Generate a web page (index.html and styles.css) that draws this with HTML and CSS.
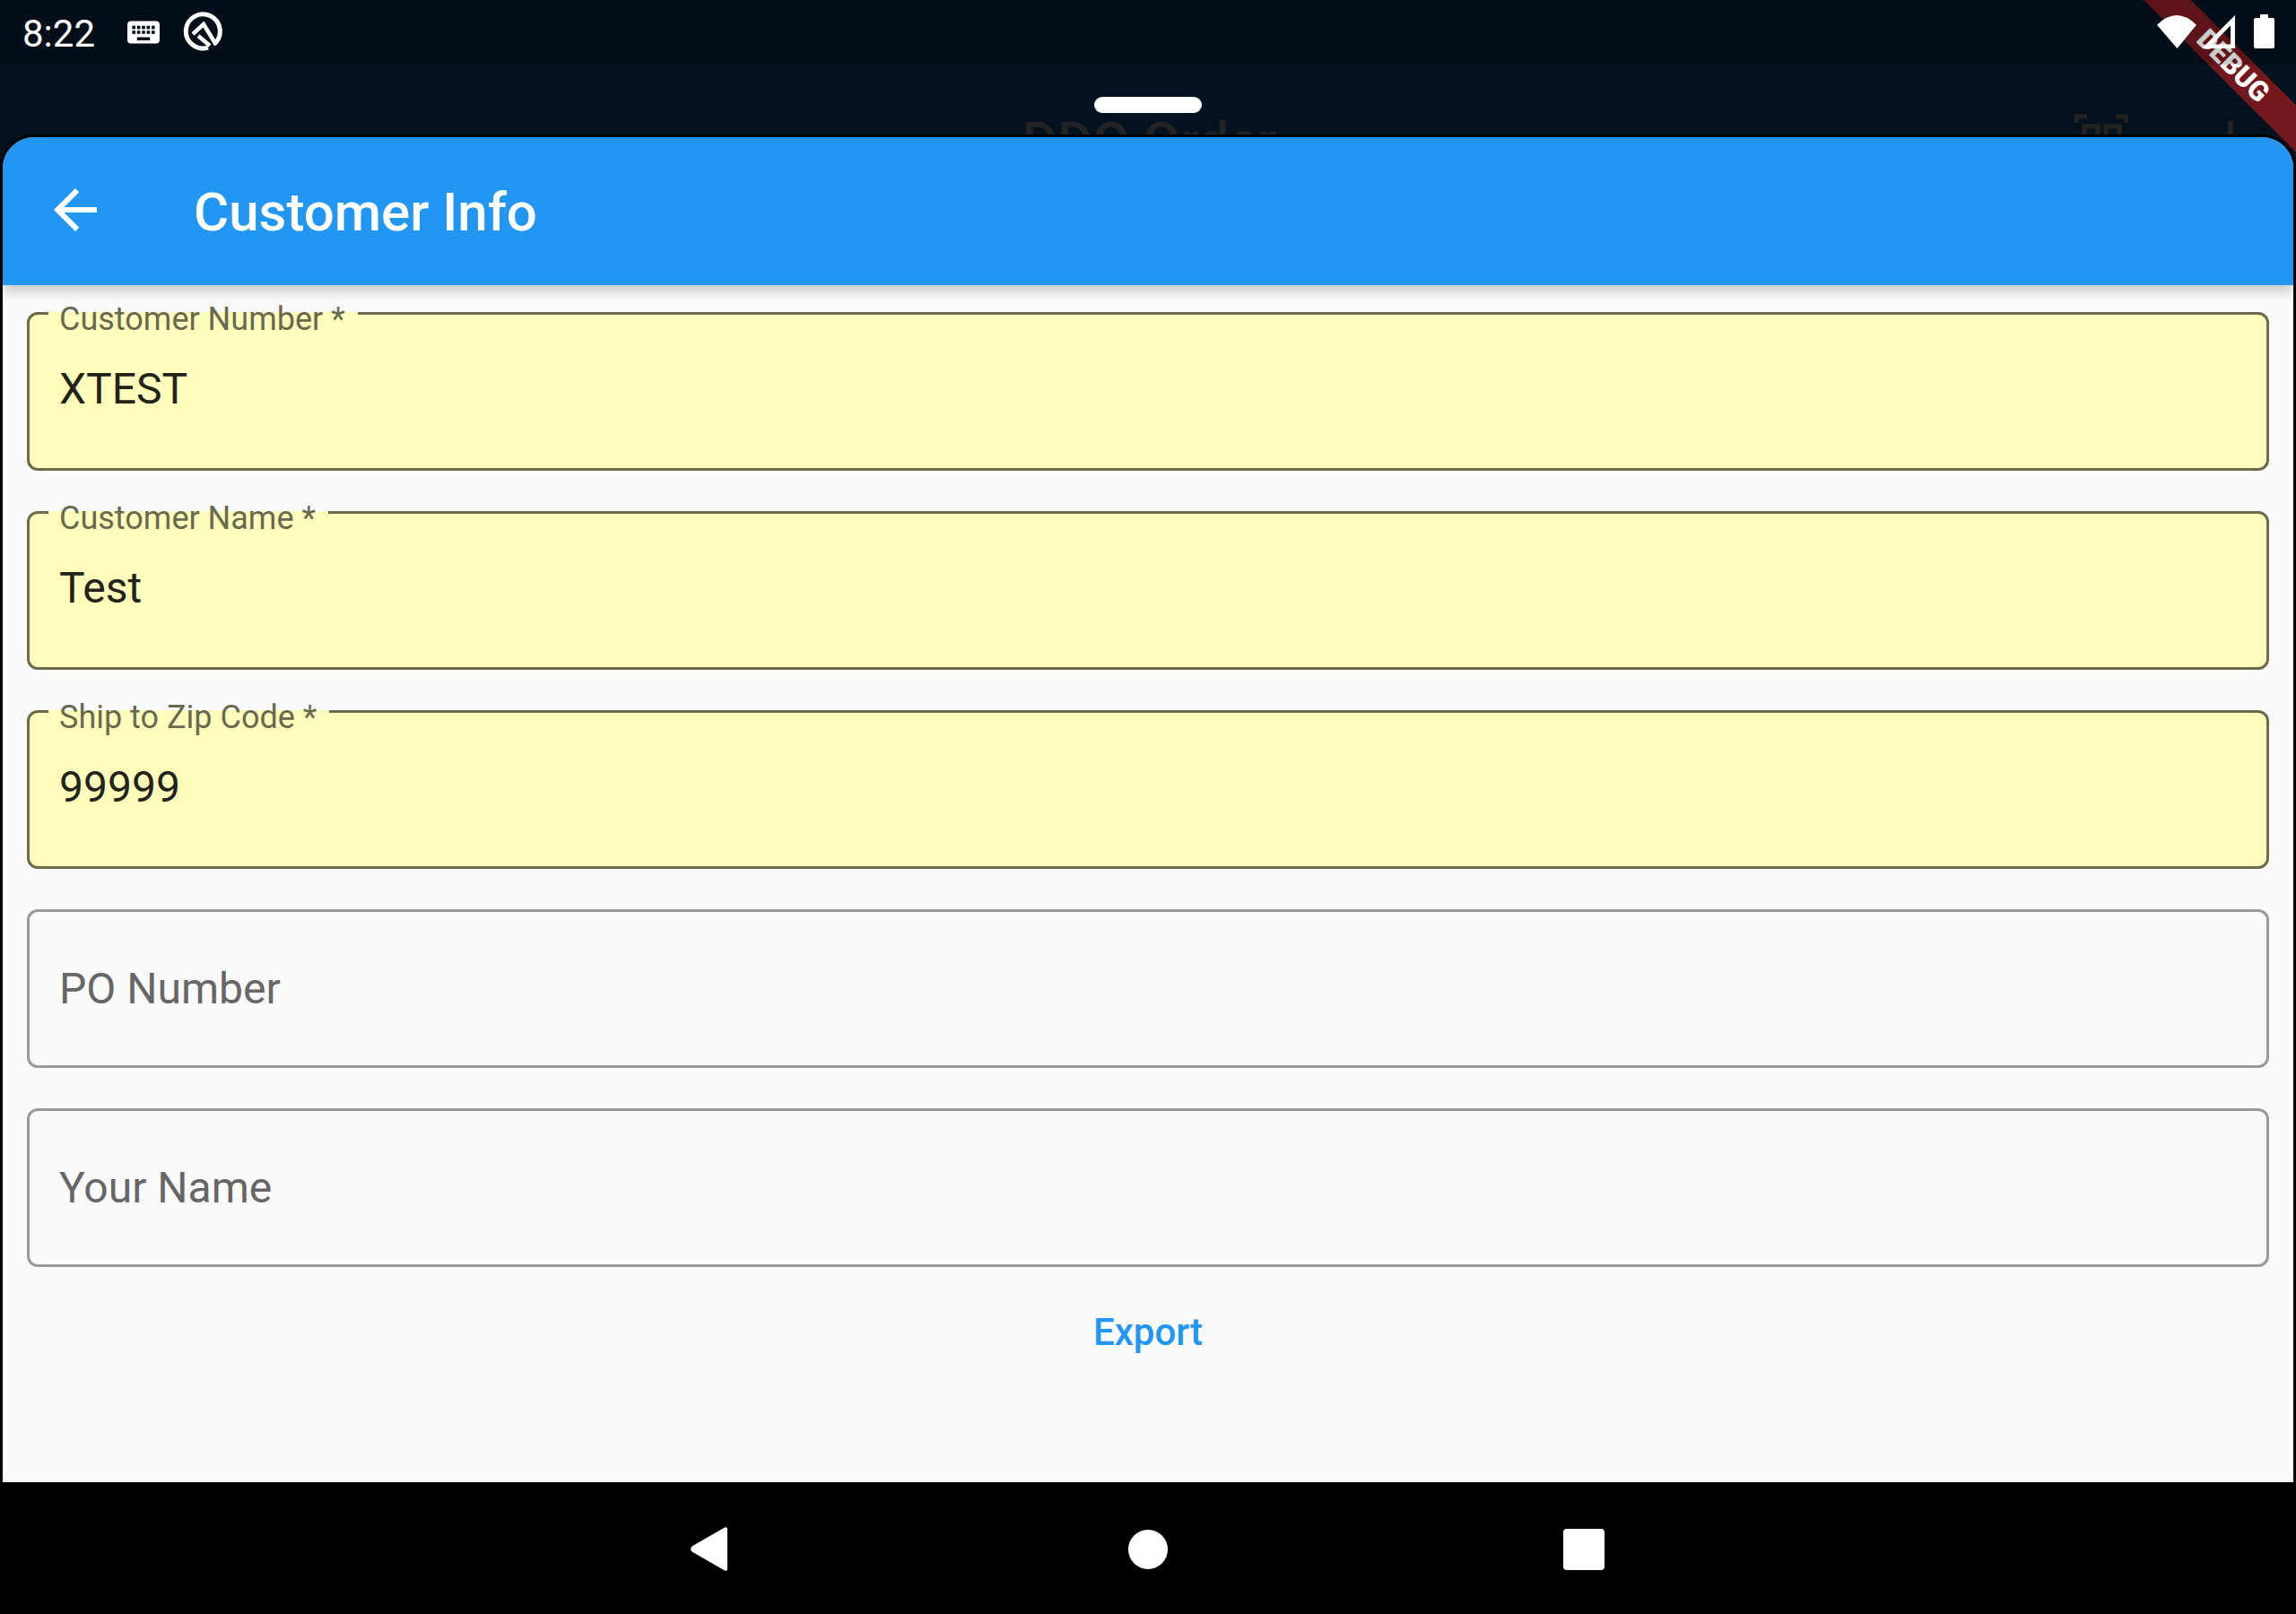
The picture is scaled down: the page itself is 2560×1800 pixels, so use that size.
FILE: index.html
```html
<!DOCTYPE html>
<html lang="en">
<head>
    <meta charset="UTF-8">
    <title>Customer Info</title>
    <link rel="stylesheet" href="styles.css">
</head>
<body>
    <div class="status-bar">
        <span class="clock">8:22</span>
        <svg class="ic-keyboard" viewBox="2 5 20 14"><path fill="#fff" d="M20 5H4c-1.1 0-1.99.9-1.99 2L2 17c0 1.1.9 2 2 2h16c1.1 0 2-.9 2-2V7c0-1.1-.9-2-2-2zm-9 3h2v2h-2V8zm0 3h2v2h-2v-2zM8 8h2v2H8V8zm0 3h2v2H8v-2zm-1 2H5v-2h2v2zm0-3H5V8h2v2zm9 7H8v-2h8v2zm0-4h-2v-2h2v2zm0-3h-2V8h2v2zm3 3h-2v-2h2v2zm0-3h-2V8h2v2z"/></svg>
        <svg class="ic-q" viewBox="0 0 44 44"><path fill="none" stroke="#fff" stroke-width="5" d="M35 36A19 19 0 1 0 28 40"/><path fill="none" stroke="#fff" stroke-width="4.5" d="M11 25L23 14L37 37M17 27L30 38"/></svg>
        <div class="status-right">
            <svg class="ic-wifi" viewBox="0 0 44 37"><path fill="#fff" d="M0 10.7Q22 -10.7 44 10.7L22.5 37Z"/></svg>
            <svg class="ic-signal" viewBox="0 0 37 37"><path fill="#fff" fill-rule="evenodd" d="M37 0V37H0ZM32 11.5V32.5H11.5Z"/></svg>
            <svg class="ic-battery" viewBox="0 0 23 38"><path fill="#fff" d="M7 0h9v4h5a2 2 0 0 1 2 2v30a2 2 0 0 1-2 2H2a2 2 0 0 1-2-2V6a2 2 0 0 1 2-2h5z"/></svg>
        </div>
    </div>

    <div class="backdrop">
        <div class="handle"></div>
        <span class="back-title">DDO Order</span>
        <svg class="back-scan" viewBox="0 0 60 30"><path fill="none" stroke="#24211f" stroke-width="5" d="M2 10V3H14M46 3H58V10M11 14H26V30H11ZM35 14H50V30H35Z"/></svg>
        <div class="back-more"></div>
    </div>

    <div class="sheet">
        <header class="app-bar">
            <svg class="ic-back" viewBox="0 0 24 24"><path fill="#fff" d="M20 11H7.83l5.59-5.59L12 4l-8 8 8 8 1.41-1.41L7.83 13H20v-2z"/></svg>
            <h1 class="title">Customer Info</h1>
        </header>
        <form class="form" onsubmit="return false;">
            <div class="field required">
                <label class="field-label">Customer Number *</label>
                <span class="field-value">XTEST</span>
            </div>
            <div class="field required">
                <label class="field-label">Customer Name *</label>
                <span class="field-value">Test</span>
            </div>
            <div class="field required">
                <label class="field-label">Ship to Zip Code *</label>
                <span class="field-value">99999</span>
            </div>
            <div class="field">
                <span class="field-hint">PO Number</span>
            </div>
            <div class="field">
                <span class="field-hint">Your Name</span>
            </div>
            <button class="export" type="submit">Export</button>
        </form>
    </div>

    <div class="nav-bar">
        <svg class="nav-back" viewBox="0 0 41 49"><path fill="#fff" d="M38 .6L1.500 21.500 1.500 21.500C-.3 23.500-.3 25.500 1.500 27.500L38 48.400C39.500 49.500 41 48.500 41 47V2C41 .5 39.500-.5 38 .6Z"/></svg>
        <div class="nav-home"></div>
        <div class="nav-recent"></div>
    </div>

    <div class="debug-banner">DEBUG</div>
</body>
</html>
```

FILE: styles.css
```css
* {
    box-sizing: border-box;
}
body {
    margin: 0;
    width: 2560px;
    height: 1800px;
    display: flex;
    flex-direction: column;
    position: relative;
    overflow: hidden;
    background-color: #04121f;
    font-family: Roboto, "Liberation Sans", sans-serif;
}

/* Status bar, sits over the debug ribbon */
.status-bar {
    height: 72px;
    flex: none;
    position: relative;
    z-index: 2;
    display: flex;
    align-items: flex-start;
    padding: 0 24px 0 25px;
    background-color: rgba(0, 0, 0, 0.2);
}
.clock {
    width: 80px;
    margin-top: 14px;
    font-size: 42px;
    line-height: 48px;
    font-weight: 400;
    color: #fff;
}
.ic-keyboard {
    width: 36px;
    height: 26px;
    margin: 23px 0 0 37px;
}
.ic-q {
    width: 44px;
    height: 44px;
    margin: 13px 0 0 26px;
}
.status-right {
    margin-left: auto;
    display: flex;
    align-items: flex-start;
}
.ic-wifi {
    width: 44px;
    height: 37px;
    margin-top: 17px;
}
.ic-signal {
    width: 37px;
    height: 37px;
    margin: 17px 0 0 6px;
}
.ic-battery {
    width: 23px;
    height: 38px;
    margin: 16px 0 0 21px;
}

/* Dimmed page behind the sheet */
.backdrop {
    height: 78px;
    flex: none;
    position: relative;
    overflow: hidden;
    display: flex;
    align-items: flex-start;
    padding: 55px 70px 0 1140px;
}
.handle {
    position: absolute;
    left: 1220px;
    top: 36px;
    width: 120px;
    height: 18px;
    border-radius: 9px;
    background-color: #fff;
}
.back-title {
    margin-top: 1px;
    font-size: 60px;
    line-height: 60px;
    font-weight: 500;
    color: #222325;
    white-space: nowrap;
}
.back-scan {
    width: 60px;
    height: 30px;
    margin-left: auto;
}
.back-more {
    width: 6px;
    height: 40px;
    margin: 8px 0 0 111px;
    background-color: #24211f;
}

/* Bottom sheet */
.sheet {
    flex: 1;
    display: flex;
    flex-direction: column;
    overflow: hidden;
    background-color: #fafafa;
    border: 3px solid #000;
    border-bottom: none;
    border-radius: 38px 38px 0 0;
}
.app-bar {
    height: 165px;
    flex: none;
    display: flex;
    align-items: center;
    padding-left: 45px;
    background-color: #2196f3;
    box-shadow: 0 6px 14px rgba(0, 0, 0, 0.22);
    position: relative;
}
.ic-back {
    width: 72px;
    height: 72px;
    margin-top: -3px;
}
.title {
    margin: 2px 0 0 96px;
    font-size: 60px;
    line-height: 70px;
    font-weight: 500;
    color: #fff;
}

/* Form */
.form {
    display: flex;
    flex-direction: column;
    gap: 45px;
    padding: 30px 27px 0;
}
.field {
    height: 177px;
    position: relative;
    display: flex;
    align-items: center;
    padding-left: 33px;
    border: 3px solid #9a9a9a;
    border-radius: 12px;
}
.field.required {
    padding-bottom: 6px;
    border-color: #6c6b4e;
    background-color: #fffdbb;
}
.field-label {
    position: absolute;
    left: 21px;
    top: -3px;
    height: 30px;
    padding: 0 14px 0 12px;
    font-size: 36px;
    line-height: 16px;
    color: #696950;
    white-space: nowrap;
    background-color: #fffdbb;
}
.field-value {
    font-size: 48px;
    line-height: 56px;
    color: #23231b;
}
.field-hint {
    font-size: 48px;
    line-height: 56px;
    color: #666;
}
.export {
    align-self: center;
    height: 90px;
    margin-top: -18px;
    padding: 0;
    border: none;
    background: none;
    font-family: inherit;
    font-size: 42px;
    font-weight: 500;
    color: #2196f3;
    cursor: pointer;
}

/* Navigation bar */
.nav-bar {
    height: 147px;
    flex: none;
    display: flex;
    align-items: center;
    justify-content: center;
    padding: 2px 1px 0 0;
    background-color: #000;
}
.nav-back {
    width: 41px;
    height: 49px;
}
.nav-home {
    width: 44px;
    height: 44px;
    margin-left: 447px;
    border-radius: 50%;
    background-color: #fff;
}
.nav-recent {
    width: 46px;
    height: 46px;
    margin-left: 441px;
    border-radius: 4px;
    background-color: #fff;
}

/* Debug ribbon */
.debug-banner {
    position: absolute;
    z-index: 1;
    left: 2330px;
    top: 55px;
    width: 320px;
    height: 37px;
    transform: rotate(45deg);
    text-align: center;
    font-size: 31px;
    line-height: 37px;
    font-weight: 900;
    color: #fff;
    background-color: rgba(183, 28, 28, 0.63);
}
```
